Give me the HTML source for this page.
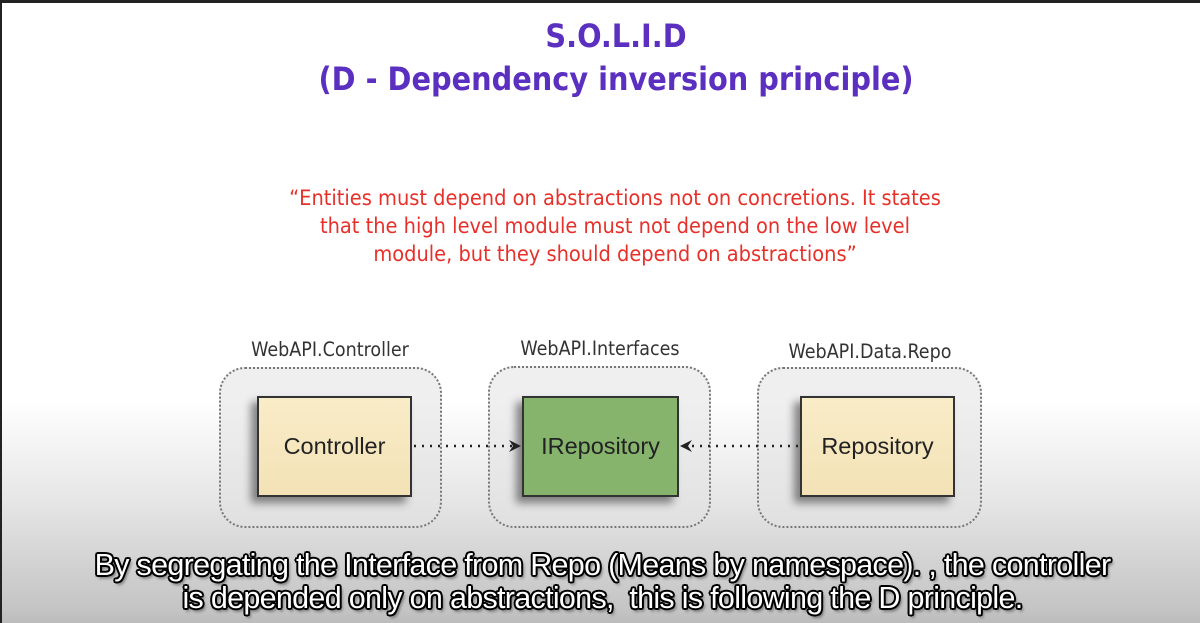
<!DOCTYPE html>
<html><head><meta charset="utf-8"><style>
*{margin:0;padding:0;box-sizing:border-box}
body{width:1200px;height:623px;overflow:hidden;position:relative;font-family:"Liberation Sans",sans-serif;
background:linear-gradient(to bottom,#fff 0,#fff 400px,#e6e6e6 500px,#c4c4c4 610px,#bcbcbc 623px);}
.frame{position:absolute;left:0;top:0;width:1200px;height:623px;border-top:3px solid #222;border-left:2px solid #222;}
.t{position:absolute;left:0;width:1232px;text-align:center;color:#5b2fbf;font-weight:bold;font-family:"DejaVu Sans Condensed","DejaVu Sans",sans-serif;}
.q{position:absolute;left:0;width:1230px;text-align:center;color:#e8302a;font-size:21.6px;line-height:28px;top:185px;font-family:"DejaVu Sans Condensed","DejaVu Sans",sans-serif;}
.grp{position:absolute;border:2px dotted #777;border-radius:26px;background:rgba(225,225,228,.55);}
.lbl{position:absolute;font-size:19.5px;color:#333;text-align:center;width:240px;font-family:"DejaVu Sans Condensed","DejaVu Sans",sans-serif;}
.box{position:absolute;border:2px solid #333;display:flex;align-items:center;justify-content:center;font-size:23.5px;color:#222;box-shadow:-6px 6px 8px rgba(0,0,0,.45);}
.y{background:linear-gradient(#f9ecc8,#f3e2b6);}
.g{background:#86b46d;}
.sub{position:absolute;left:0;width:1205px;text-align:center;color:#fff;font-size:30.5px;line-height:33px;top:549px;letter-spacing:-0.7px;
text-shadow:-2px 0 #000,2px 0 #000,0 -2px #000,0 2px #000,-1.5px -1.5px #000,1.5px 1.5px #000,-1.5px 1.5px #000,1.5px -1.5px #000,2px 3px 3px rgba(0,0,0,.6);}
</style></head><body>
<div class="frame"></div>
<div class="t" style="top:17px;font-size:32px;">S.O.L.I.D</div>
<div class="t" style="top:60px;font-size:32px;">(D - Dependency inversion principle)</div>
<div class="q">“Entities must depend on abstractions not on concretions. It states<br>that the high level module must not depend on the low level<br>module, but they should depend on abstractions”</div>

<div class="lbl" style="left:210px;top:338px">WebAPI.Controller</div>
<div class="lbl" style="left:480px;top:337px">WebAPI.Interfaces</div>
<div class="lbl" style="left:750px;top:340px">WebAPI.Data.Repo</div>

<div class="grp" style="left:219px;top:367px;width:223px;height:161px"></div>
<div class="grp" style="left:488px;top:366px;width:223px;height:162px"></div>
<div class="grp" style="left:757px;top:367px;width:225px;height:161px"></div>

<div class="box y" style="left:257px;top:396px;width:155px;height:101px">Controller</div>
<div class="box g" style="left:522px;top:396px;width:157px;height:101px">IRepository</div>
<div class="box y" style="left:800px;top:396px;width:155px;height:101px">Repository</div>

<svg style="position:absolute;left:0;top:0" width="1200" height="623">
<line x1="414" y1="446" x2="512" y2="446" stroke="#222" stroke-width="2.5" stroke-dasharray="2 6"/>
<path d="M509 440 L521 446 L509 452 L513 446 Z" fill="#222"/>
<line x1="692" y1="446" x2="798" y2="446" stroke="#222" stroke-width="2.5" stroke-dasharray="2 6"/>
<path d="M692 440 L680 446 L692 452 L688 446 Z" fill="#222"/>
</svg>

<div class="sub">By segregating the Interface from Repo (Means by namespace). , the controller<br>is depended only on abstractions,&nbsp; this is following the D principle.</div>
</body></html>
